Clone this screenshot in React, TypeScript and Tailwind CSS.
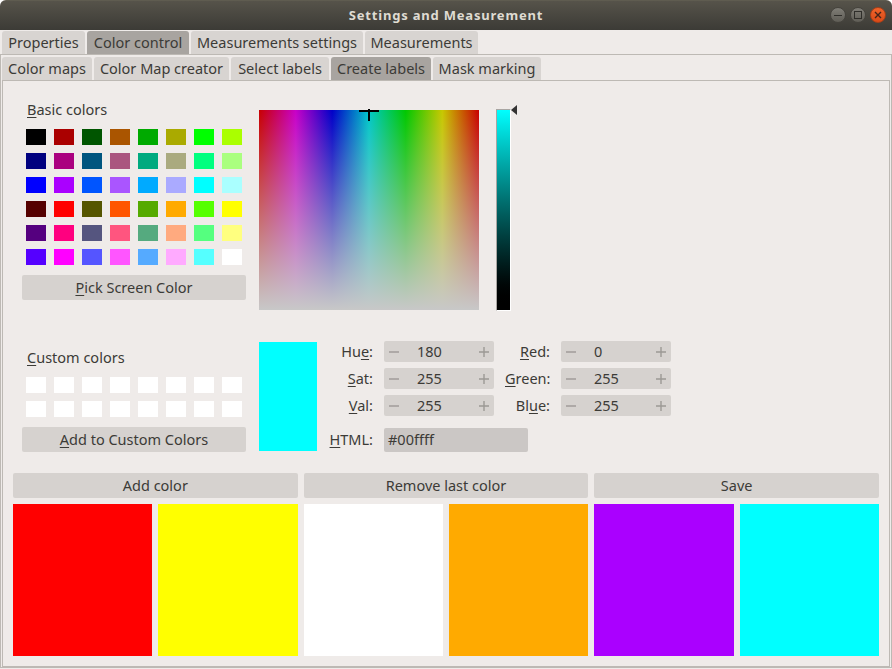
const basicColors = [
  "#000000", "#aa0000", "#005500", "#aa5500", "#00aa00", "#aaaa00", "#00ff00", "#aaff00",
  "#00007f", "#aa007f", "#00557f", "#aa557f", "#00aa7f", "#aaaa7f", "#00ff7f", "#aaff7f",
  "#0000ff", "#aa00ff", "#0055ff", "#aa55ff", "#00aaff", "#aaaaff", "#00ffff", "#aaffff",
  "#550000", "#ff0000", "#555500", "#ff5500", "#55aa00", "#ffaa00", "#55ff00", "#ffff00",
  "#55007f", "#ff007f", "#55557f", "#ff557f", "#55aa7f", "#ffaa7f", "#55ff7f", "#ffff7f",
  "#5500ff", "#ff00ff", "#5555ff", "#ff55ff", "#55aaff", "#ffaaff", "#55ffff", "#ffffff",
];
const savedColors = ["#ff0000", "#ffff00", "#ffffff", "#ffaa00", "#aa00ff", "#00ffff"];

function Tab({ label, width, active }: { label: string; width: string; active?: boolean }) {
  return (
    <div
      className={`${width} flex items-center justify-center rounded-t-[3px] ${
        active ? "bg-[#a8a4a0]" : "bg-[#d8d4d1]"
      }`}
    >
      {label}
    </div>
  );
}

function Mnemonic({ before = "", letter, after = "" }: { before?: string; letter: string; after?: string }) {
  return (
    <span>
      {before}
      <span className="underline underline-offset-2">{letter}</span>
      {after}
    </span>
  );
}

function Button({ children }: { children: React.ReactNode }) {
  return (
    <button className="h-[25px] w-full rounded-[2px] bg-[#d6d2cf] flex items-center justify-center">
      {children}
    </button>
  );
}

function SpinBox({ value }: { value: string }) {
  return (
    <div className="h-[21px] w-[110px] rounded-[2px] bg-[#d6d2cf] flex items-center px-[5px]">
      <svg width="10" height="10" viewBox="0 0 10 10" className="shrink-0">
        <path d="M0 5h10" stroke="#9c9995" strokeWidth="1.4" />
      </svg>
      <span className="ml-[18px] flex-1">{value}</span>
      <svg width="10" height="10" viewBox="0 0 10 10" className="shrink-0">
        <path d="M0 5h10M5 0v10" stroke="#9c9995" strokeWidth="1.4" />
      </svg>
    </div>
  );
}

function FormLabel({ children }: { children: React.ReactNode }) {
  return <div className="text-right h-[21px] leading-[21px] whitespace-nowrap">{children}</div>;
}

function WindowButton({ children }: { children: React.ReactNode }) {
  return (
    <div className="size-[16px] rounded-full bg-gradient-to-b from-[#7f7d76] to-[#5f5d56] border border-[#45433d] flex items-center justify-center">
      {children}
    </div>
  );
}

export default function App() {
  return (
    <div className="w-[892px] h-[669px] bg-[#efebe9] text-[#3c3b37] text-[14.5px] overflow-hidden rounded-t-[6px] font-['Noto_Sans',sans-serif]">
      {/* title bar */}
      <div className="relative h-[30px] border-t border-[#5f5c50] bg-gradient-to-b from-[#56534a] to-[#3c3b36] flex items-center justify-center">
        <span className="text-[13px] font-bold tracking-[0.8px] text-[#dfdbd2]">Settings and Measurement</span>
        <div className="absolute right-[6px] top-[6px] flex gap-[4px]">
          <WindowButton>
            <div className="w-[8px] h-[1px] bg-[#2f2e2a]" />
          </WindowButton>
          <WindowButton>
            <div className="size-[8px] border border-[#2f2e2a]" />
          </WindowButton>
          <div className="size-[16px] rounded-full bg-gradient-to-b from-[#f0642b] to-[#d94a17] border border-[#a83f18] flex items-center justify-center">
            <svg width="8" height="8" viewBox="0 0 8 8">
              <path d="M1 1l6 6M7 1l-6 6" stroke="#43241a" strokeWidth="1.4" />
            </svg>
          </div>
        </div>
      </div>

      {/* outer tabs */}
      <div className="flex gap-[2px] pl-[2px] pt-[1px] h-[24px]">
        <Tab label="Properties" width="w-[83px]" />
        <Tab label="Color control" width="w-[102px]" active />
        <Tab label="Measurements settings" width="w-[172px]" />
        <Tab label="Measurements" width="w-[113px]" />
      </div>

      <div className="h-[614px] border border-[#bdb9b4] pt-[2px] px-[1px]">
        {/* inner tabs */}
        <div className="flex gap-[2px] h-[23px]">
          <Tab label="Color maps" width="w-[90px]" />
          <Tab label="Color Map creator" width="w-[135px]" />
          <Tab label="Select labels" width="w-[98px]" />
          <Tab label="Create labels" width="w-[100px]" active />
          <Tab label="Mask marking" width="w-[108px]" />
        </div>

        <div className="h-[587px] w-[888px] border border-[#bdb9b4] px-[10px]">
          {/* colour dialog */}
          <div className="flex gap-[13px] pl-[9px] pt-[19px]">
            <div className="w-[224px] shrink-0">
              <div className="h-[20px] leading-[18px] pl-[5px]">
                <Mnemonic letter="B" after="asic colors" />
              </div>
              <div className="mt-[9px] pl-[4px] grid grid-cols-[repeat(8,20px)] gap-x-[8px] gap-y-[8px]">
                {basicColors.map((color) => (
                  <div key={color} className="h-[16px]" style={{ backgroundColor: color }} />
                ))}
              </div>
              <div className="mt-[10px]">
                <Button>
                  <Mnemonic letter="P" after="ick Screen Color" />
                </Button>
              </div>
              <div className="mt-[48px] h-[20px] leading-[18px] pl-[5px]">
                <Mnemonic letter="C" after="ustom colors" />
              </div>
              <div className="mt-[9px] pl-[4px] grid grid-cols-[repeat(8,20px)] gap-x-[8px] gap-y-[8px]">
                {Array.from({ length: 16 }).map((_, i) => (
                  <div key={i} className="h-[16px] bg-white" />
                ))}
              </div>
              <div className="mt-[10px]">
                <Button>
                  <Mnemonic letter="A" after="dd to Custom Colors" />
                </Button>
              </div>
            </div>

            <div className="flex-1">
              <div className="flex items-start gap-[17px] pt-[9px]">
                <div className="relative mt-[1px] w-[220px] h-[200px] bg-[linear-gradient(to_bottom,rgba(200,200,200,0),rgb(200,200,200)),linear-gradient(to_right,#c80000,#c800c8,#0000c8,#00c8c8,#00c800,#c8c800,#c80000)]">
                  <div className="absolute left-[100px] top-0 w-[20px] h-[2px] bg-black" />
                  <div className="absolute left-[109px] top-[-1px] w-[2px] h-[12px] bg-black" />
                </div>
                <div className="relative w-[15px] h-[202px] border-[1px] border-t-[#a9a5a2] border-l-[#a9a5a2] border-r-white border-b-white">
                  <div className="h-full w-full bg-gradient-to-b from-[#00ffff] to-black" />
                  <svg width="6" height="10" viewBox="0 0 6 10" className="absolute left-[14px] top-[-5px]">
                    <path d="M0 5L6 0v10z" fill="#333333" />
                  </svg>
                </div>
              </div>

              <div className="mt-[30px] flex items-start">
                <div className="mt-[1px] w-[58px] h-[109px] bg-[#00ffff]" />
                <div>
                  <div className="grid grid-cols-[56px_110px_45px_110px] gap-x-[11px] gap-y-[6px]">
                    <FormLabel>
                      <Mnemonic before="Hu" letter="e" after=":" />
                    </FormLabel>
                    <SpinBox value="180" />
                    <FormLabel>
                      <Mnemonic letter="R" after="ed:" />
                    </FormLabel>
                    <SpinBox value="0" />
                    <FormLabel>
                      <Mnemonic letter="S" after="at:" />
                    </FormLabel>
                    <SpinBox value="255" />
                    <FormLabel>
                      <Mnemonic letter="G" after="reen:" />
                    </FormLabel>
                    <SpinBox value="255" />
                    <FormLabel>
                      <Mnemonic letter="V" after="al:" />
                    </FormLabel>
                    <SpinBox value="255" />
                    <FormLabel>
                      <Mnemonic before="Bl" letter="u" after="e:" />
                    </FormLabel>
                    <SpinBox value="255" />
                  </div>
                  <div className="mt-[12px] flex items-center gap-[11px]">
                    <div className="w-[56px] text-right">
                      <Mnemonic letter="H" after="TML:" />
                    </div>
                    <div className="h-[24px] w-[144px] rounded-[2px] bg-[#cbc7c5] flex items-center px-[4px]">#00ffff</div>
                  </div>
                </div>
              </div>
            </div>
          </div>

          {/* saved colours */}
          <div className="mt-[21px] grid grid-cols-3 gap-[6px]">
            <Button>Add color</Button>
            <Button>Remove last color</Button>
            <Button>Save</Button>
          </div>
          <div className="mt-[6px] grid grid-cols-6 gap-[6px]">
            {savedColors.map((color) => (
              <div key={color} className="h-[152px]" style={{ backgroundColor: color }} />
            ))}
          </div>
        </div>
      </div>
    </div>
  );
}
